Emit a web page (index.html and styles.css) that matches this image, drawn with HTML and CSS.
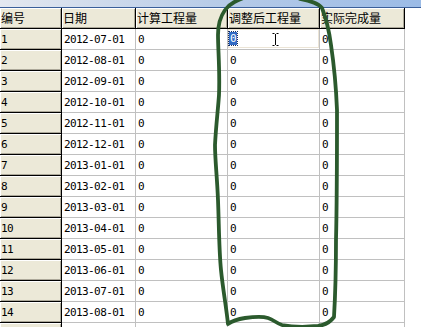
FILE: index.html
```html
<!DOCTYPE html>
<html>
<head>
<meta charset="utf-8">
<link rel="stylesheet" href="styles.css">
</head>
<body>
<div class="page">
  <div class="topstrip"></div>
  <div class="grid">
    <div class="hc">编号</div><div class="hc">日期</div><div class="hc">计算工程量</div><div class="hc">调整后工程量</div><div class="hc">实际完成量</div>
    <div class="rh">1</div><div class="dc">2012-07-01</div><div class="dc">0</div><div class="dc ed"><span class="edbox"><span class="sel">0</span></span></div><div class="dc">0</div>
    <div class="rh">2</div><div class="dc">2012-08-01</div><div class="dc">0</div><div class="dc">0</div><div class="dc">0</div>
    <div class="rh">3</div><div class="dc">2012-09-01</div><div class="dc">0</div><div class="dc">0</div><div class="dc">0</div>
    <div class="rh">4</div><div class="dc">2012-10-01</div><div class="dc">0</div><div class="dc">0</div><div class="dc">0</div>
    <div class="rh">5</div><div class="dc">2012-11-01</div><div class="dc">0</div><div class="dc">0</div><div class="dc">0</div>
    <div class="rh">6</div><div class="dc">2012-12-01</div><div class="dc">0</div><div class="dc">0</div><div class="dc">0</div>
    <div class="rh">7</div><div class="dc">2013-01-01</div><div class="dc">0</div><div class="dc">0</div><div class="dc">0</div>
    <div class="rh">8</div><div class="dc">2013-02-01</div><div class="dc">0</div><div class="dc">0</div><div class="dc">0</div>
    <div class="rh">9</div><div class="dc">2013-03-01</div><div class="dc">0</div><div class="dc">0</div><div class="dc">0</div>
    <div class="rh">10</div><div class="dc">2013-04-01</div><div class="dc">0</div><div class="dc">0</div><div class="dc">0</div>
    <div class="rh">11</div><div class="dc">2013-05-01</div><div class="dc">0</div><div class="dc">0</div><div class="dc">0</div>
    <div class="rh">12</div><div class="dc">2013-06-01</div><div class="dc">0</div><div class="dc">0</div><div class="dc">0</div>
    <div class="rh">13</div><div class="dc">2013-07-01</div><div class="dc">0</div><div class="dc">0</div><div class="dc">0</div>
    <div class="rh">14</div><div class="dc">2013-08-01</div><div class="dc">0</div><div class="dc">0</div><div class="dc">0</div>
    <div class="rh"></div><div class="dc"></div><div class="dc"></div><div class="dc"></div><div class="dc"></div>
  </div>
  <svg class="overlay" width="421" height="327" viewBox="0 0 421 327">
    <path class="ibeam" d="M272.5 33.5h2M276.5 33.5h2M275.5 34v11M272.5 45.5h2M276.5 45.5h2"/>
    <path class="ink" d="M246 -3 C238 0 230 3 225 10 C220 17 218 24 218 35 C218 50 220 70 219 95 C218 110 216 125 215 145 C215 160 217 175 218 200 C219 225 219 250 221 270 C223 290 226 305 228 324 C232 321 238 319 245 318 C252 317 262 316 268 318 C274 320 276 323 282 325 C292 327 308 327 318 326 C326 325 331 321 334 317 C335 300 336 270 336 240 C337 200 337 150 337 110 C336 85 334 65 331 45 C329 30 326 18 322 8 C318 3 310 1 300 -1"/>
  </svg>
</div>
</body>
</html>
```
FILE: styles.css
```css
html, body {
  margin: 0;
  padding: 0;
  background: #fff;
}
.page {
  position: relative;
  width: 421px;
  height: 327px;
  overflow: hidden;
  background: #fff;
}
.topstrip {
  height: 7px;
  background: linear-gradient(to right, #e4e8f0 0%, #b8cce8 50%, #9bbbe6 100%);
  border-bottom: 1px solid #3a5f9a;
}
.grid {
  display: grid;
  grid-template-columns: 62px 74px 92px 92px 85px;
  grid-auto-rows: 21px;
  width: 405px;
}
.grid > div {
  box-sizing: border-box;
  overflow: hidden;
  white-space: nowrap;
  display: flex;
  align-items: center;
  padding-left: 1px;
  font-family: "DejaVu Sans Mono", "Noto Sans CJK SC", monospace;
  font-size: 11px;
  letter-spacing: -0.6px;
  color: #000;
}
.hc {
  background: #ece9d8;
  border-right: 1px solid #000;
  border-bottom: 1px solid #000;
  box-shadow: inset 1px 1px 0 #fff, inset -1px -1px 0 #aca899;
  font-family: "Noto Sans CJK SC", sans-serif !important;
  font-size: 12px !important;
  letter-spacing: 0 !important;
  padding-bottom: 1px;
}
.rh {
  background: #ece9d8;
  border-right: 1px solid #000;
  border-bottom: 1px solid #000;
  box-shadow: inset 1px 1px 0 #fff, inset -1px -1px 0 #aca899;
}
.dc {
  background: #fff;
  border-right: 1px solid #c0c0c0;
  border-bottom: 1px solid #c0c0c0;
  padding-left: 2px !important;
}
.ed {
  padding: 0 !important;
}
.edbox {
  box-sizing: border-box;
  width: 100%;
  height: 19px;
  margin-top: -1px;
  border: 1px solid #ebe4d6;
  display: flex;
  align-items: center;
  padding-left: 0px;
}
.sel {
  background: #316ac5;
  color: #fff;
  padding: 0 1px;
  line-height: 13px;
  outline: 1px dotted #1a2f60;
}
.overlay {
  position: absolute;
  left: 0;
  top: 0;
  pointer-events: none;
}
.ink {
  fill: none;
  stroke: #2b5a2d;
  stroke-width: 3.8;
  stroke-linecap: round;
  stroke-linejoin: round;
}
.ibeam {
  fill: none;
  stroke: #000;
  stroke-width: 1;
}
```
